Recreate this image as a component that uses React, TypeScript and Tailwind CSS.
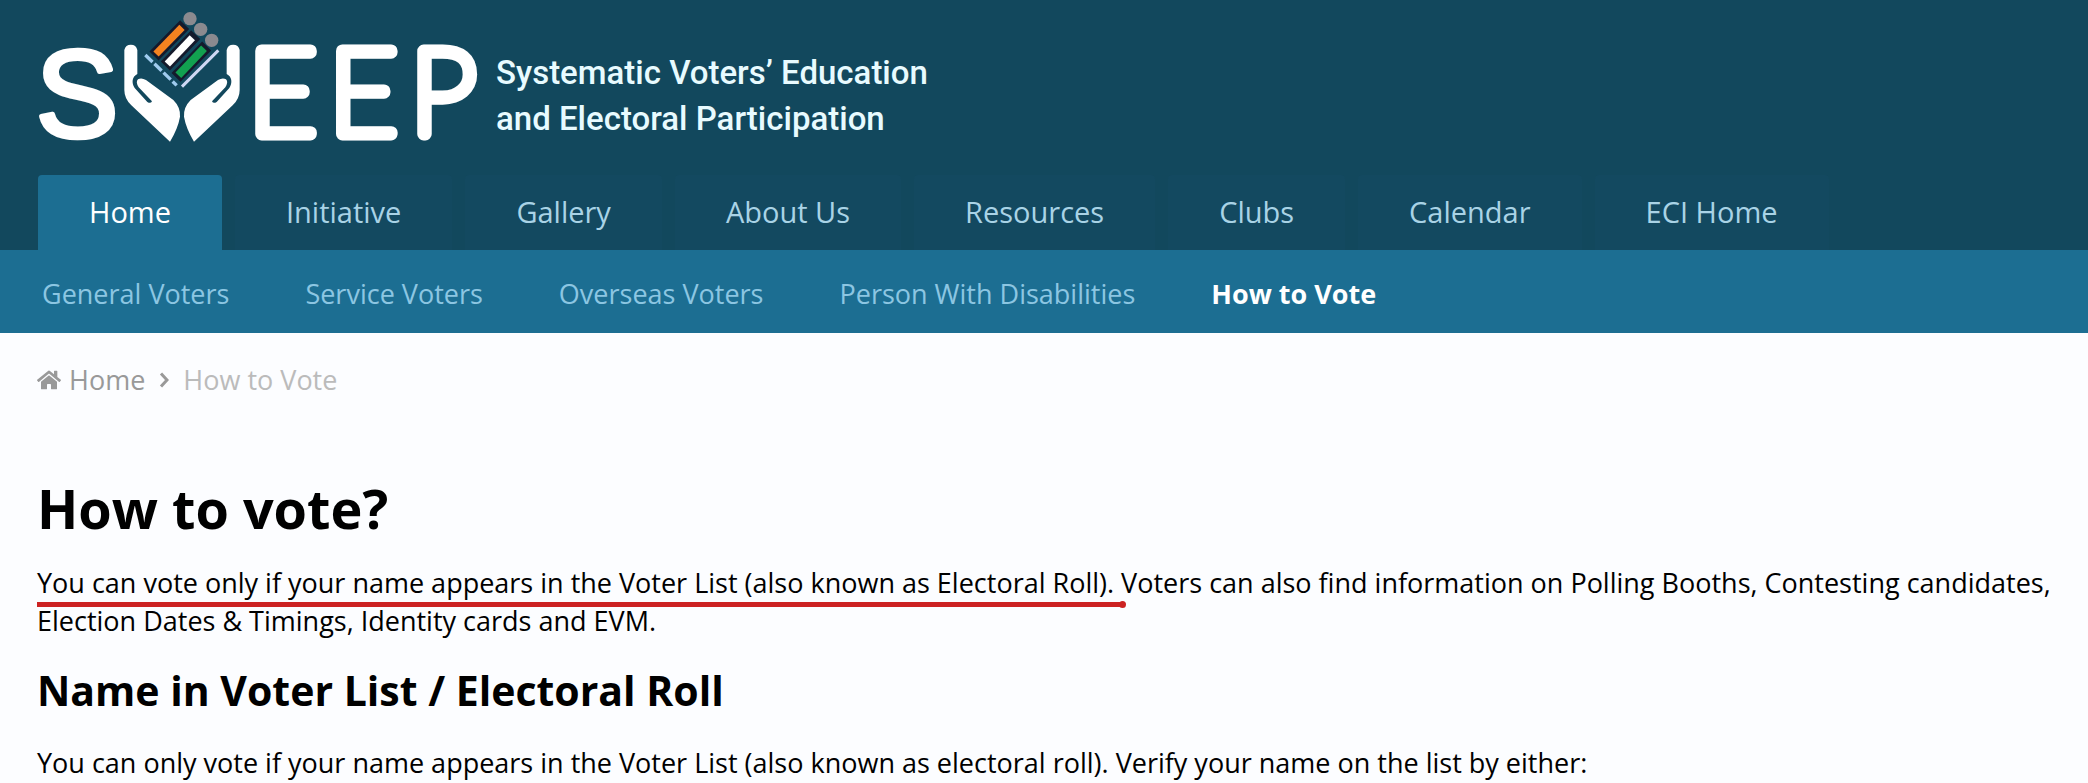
import { FaHome } from 'react-icons/fa'
import { clsx } from 'clsx'

type NavItem = { label: string; active?: boolean }

const mainNav: NavItem[] = [
  { label: 'Home', active: true },
  { label: 'Initiative' },
  { label: 'Gallery' },
  { label: 'About Us' },
  { label: 'Resources' },
  { label: 'Clubs' },
  { label: 'Calendar' },
  { label: 'ECI Home' },
]

const subNav: NavItem[] = [
  { label: 'General Voters' },
  { label: 'Service Voters' },
  { label: 'Overseas Voters' },
  { label: 'Person With Disabilities' },
  { label: 'How to Vote', active: true },
]

const HAND =
  'M43 150a20 20 0 0 1 39 0V222C66 230 64 248 74 264L112 306Q122 312 126 304L86 262Q76 246 84 238Q94 232 108 240L190 300Q212 322 210 350Q204 385 180 425L64 316Q43 296 43 270Z'

function Logo() {
  return (
    <svg viewBox="30 0 1398 525" className="h-[175px] w-[466px] shrink-0" role="img" aria-label="SWEEP">
      <g fill="#fff" stroke="#fff" strokeLinejoin="round" strokeLinecap="round">
        <text x="47" y="411" fontFamily="Liberation Sans, sans-serif" fontSize="372" strokeWidth="14">
          S
        </text>
        <text x="684 926 1170" y="401" fontFamily="Lato, sans-serif" fontSize="356" fontWeight="100" strokeWidth="39">
          EEP
        </text>
      </g>
      <g transform="translate(270 0)">
        <path d={HAND} fill="#fff" />
        <path d={HAND} fill="#fff" transform="translate(432 0) scale(-1 1)" />
        <g stroke="#141a2c" strokeWidth="38">
          <path d="M224 74L132 168M257 104L166 198M290 138L198 232" />
        </g>
        <path d="M216 82L138 162" stroke="#f58220" strokeWidth="22" />
        <path d="M247 113L172 192" stroke="#fff" strokeWidth="22" />
        <path d="M282 145L205 226" stroke="#12a150" strokeWidth="24" />
        <g fill="#8b8a8f">
          <circle cx="240" cy="56" r="20" />
          <circle cx="272" cy="88" r="20" />
          <circle cx="305" cy="121" r="20" />
        </g>
        <path d="M106 165L200 256" stroke="#9fcbee" strokeWidth="10" strokeDasharray="30 8" />
        <path d="M216 260L325 151" stroke="#cfd8f4" strokeWidth="9" />
      </g>
    </svg>
  )
}

export default function App() {
  return (
    <div className="min-h-screen bg-[#fcfdff] font-['Open_Sans',sans-serif] text-black">
      <header className="bg-[#12485d]">
        <div className="flex items-start px-[30px]">
          <a href="#" className="flex items-start">
            <Logo />
            <span className="pt-[50px] font-[Roboto,sans-serif] text-[33px] leading-[46px] font-medium whitespace-nowrap text-[#e8fbff]">
              Systematic Voters’ Education
              <br />
              and Electoral Participation
            </span>
          </a>
        </div>
        <nav className="flex gap-[13px] px-[38px]" aria-label="Main">
          {mainNav.map((item) => (
            <a
              key={item.label}
              href="#"
              className={clsx(
                'rounded-t-[4px] px-[51px] pb-[2px] text-[29px] leading-[73px] whitespace-nowrap',
                item.active ? 'bg-[#1c6e92] text-white' : 'bg-[#134960] text-[#a9d3e6]',
              )}
            >
              {item.label}
            </a>
          ))}
        </nav>
      </header>

      <nav className="flex gap-[76px] bg-[#1c6e92] px-[42px] pt-1 text-[27px] leading-[79px]" aria-label="Section">
        {subNav.map((item) => (
          <a
            key={item.label}
            href="#"
            className={clsx('whitespace-nowrap', item.active ? 'font-bold text-white' : 'text-[#8cc6e2]')}
          >
            {item.label}
          </a>
        ))}
      </nav>

      <main className="px-[37px] pt-7 text-[27px] leading-[38px]">
        <nav className="flex items-center" aria-label="Breadcrumb">
          <a href="#" className="flex items-center gap-2 text-[#999]">
            <FaHome className="size-6" />
            Home
          </a>
          <svg viewBox="0 0 10 16" className="mx-[14px] h-4 w-[10px]" fill="none" stroke="#999" strokeWidth="3">
            <path d="M2 1.500L8 8L2 14.500" />
          </svg>
          <span className="text-[#bbb]">How to Vote</span>
        </nav>

        <h1 className="mt-[73px] text-[54px] leading-[72px] font-bold">How to vote?</h1>
        <div className="relative mt-5">
          <p>
            You can vote only if your name appears in the Voter List (also known as Electoral Roll). Voters can also
            find information on Polling Booths, Contesting candidates, Election Dates &amp; Timings, Identity cards and
            EVM.
          </p>
          {/* red pen mark under the first sentence */}
          <span className="absolute top-[37px] left-0 flex h-[7px] w-[1089px] items-center">
            <span className="h-[5px] flex-1 bg-[#cc2222]" />
            <span className="-ml-[4px] size-[7px] rounded-full bg-[#cc2222]" />
          </span>
        </div>

        <h2 className="mt-[22px] text-[41px] leading-[56px] font-bold">Name in Voter List / Electoral Roll</h2>
        <p className="mt-[26px]">
          You can only vote if your name appears in the Voter List (also known as electoral roll). Verify your name on
          the list by either:
        </p>
      </main>
    </div>
  )
}
